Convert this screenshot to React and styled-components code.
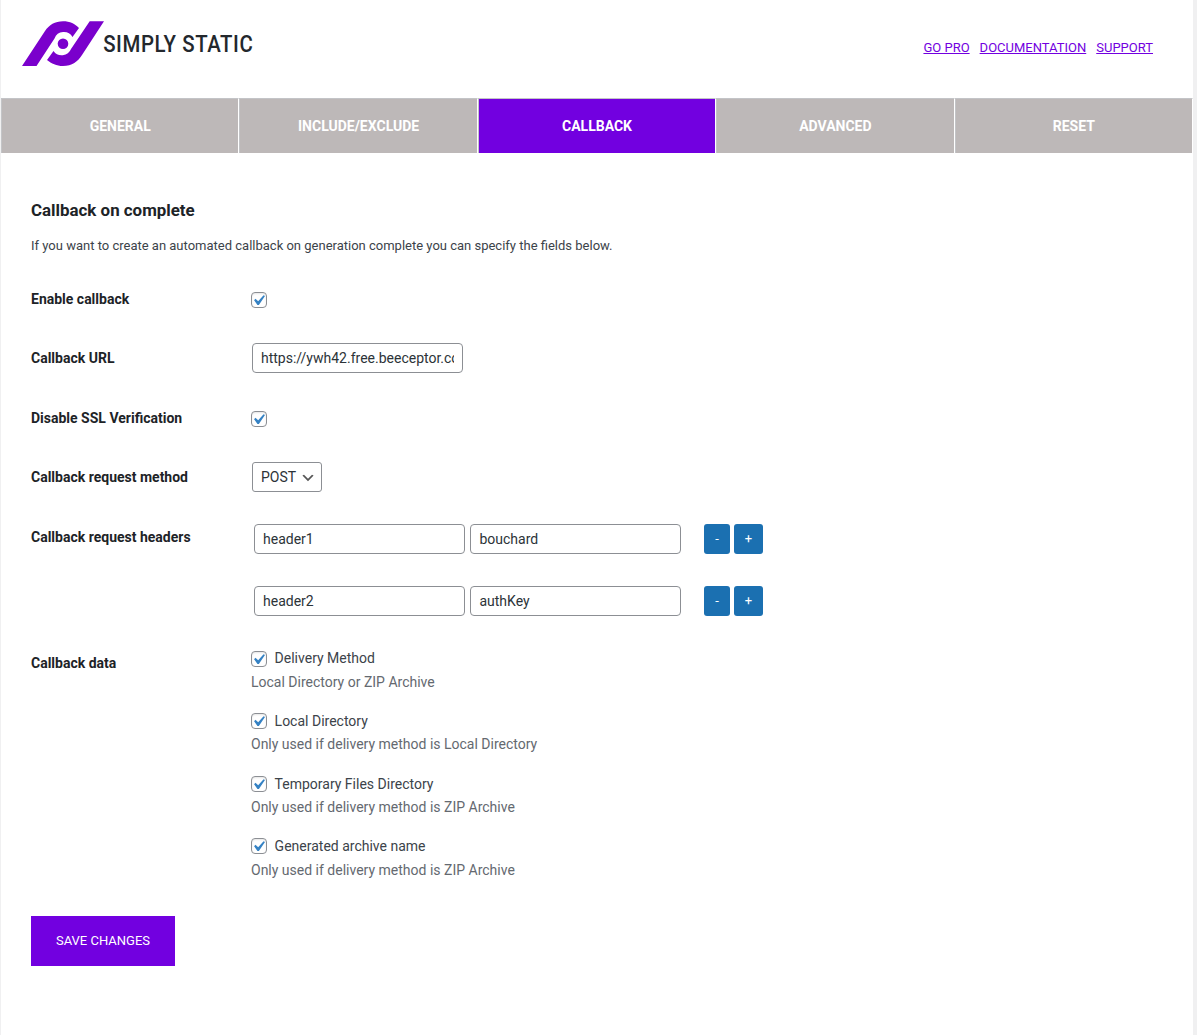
import React from "react";
import styled, { createGlobalStyle } from "styled-components";

const GlobalStyle = createGlobalStyle`
  *, *::before, *::after { box-sizing: border-box; }
  body { margin: 0; background: #f0f0f1; font: 13px/1.4 Roboto, "Liberation Sans", sans-serif; color: #3c434a; }
  h2, p { margin: 0; }
`;

const Page = styled.main`
  width: 1192px;
  min-height: 1035px;
  margin-left: 1px;
  background: #fff;
`;
const Header = styled.header`
  display: flex;
  justify-content: space-between;
  height: 98px;
  padding: 18px 40px 0 20px;
`;
const Links = styled.nav`
  display: flex;
  gap: 10px;
  padding-top: 21px;
`;
const Link = styled.a`
  color: #7200e0;
  font-size: 13px;
  line-height: 18px;
  text-decoration: underline;
  text-transform: uppercase;
`;
const Tabs = styled.nav`
  display: grid;
  grid-template-columns: repeat(5, 1fr);
  height: 55px;
`;
const Tab = styled.a`
  display: flex;
  align-items: center;
  justify-content: center;
  border: 1px solid #c3c4c7;
  border-right-color: #fff;
  border-bottom: 0;
  background: ${(p) => (p.$active ? "#7200e0" : "#bdb8b8")};
  color: #fff;
  font-size: 14px;
  font-weight: 700;
  line-height: 20px;
  text-transform: uppercase;
`;
const Form = styled.form`
  padding: 46px 30px 0;
`;
const Title = styled.h2`
  color: #1d2327;
  font-size: 16.9px;
  font-weight: 700;
  line-height: 22px;
`;
const Intro = styled.p`
  margin-top: 15px;
  font-size: 13px;
  line-height: 20px;
`;
const Row = styled.div`
  display: grid;
  grid-template-columns: 220px 1fr;
  height: ${(p) => p.$height}px;
`;
const Label = styled.label`
  padding-top: ${(p) => p.$top || 0}px;
  color: #1d2327;
  font-size: 14px;
  font-weight: 700;
  line-height: 18px;
`;
const Field = styled.div`
  padding: ${(p) => p.$top || 0}px 0 0 ${(p) => p.$left || 0}px;
`;
const Box = styled.span`
  display: inline-flex;
  flex: none;
  width: 16px;
  height: 16px;
  border: 1px solid #8c8f94;
  border-radius: 4px;
  background: #fff;
  box-shadow: inset 0 1px 2px rgba(0, 0, 0, 0.1);
`;
const Tick = styled.svg`
  flex: none;
  width: 21px;
  height: 21px;
  margin: -3px 0 0 -4px;
`;
const Input = styled.input`
  display: block;
  width: 211px;
  height: 30px;
  margin: 0;
  padding: 0 8px;
  border: 1px solid #8c8f94;
  border-radius: 4px;
  background: #fff;
  color: #2c3338;
  font: 14px/28px Roboto, sans-serif;
`;
const Select = styled.div`
  display: flex;
  align-items: center;
  justify-content: space-between;
  width: 70px;
  height: 30px;
  padding: 0 5px 0 8px;
  border: 1px solid #8c8f94;
  border-radius: 3px;
  color: #2c3338;
  font-size: 14px;
  line-height: 20px;
`;
const Chevron = styled.svg`
  width: 16px;
  height: 16px;
  margin-top: 2px;
`;
const HeaderLine = styled.div`
  display: flex;
  margin-bottom: 32px;
`;
const Pair = styled.div`
  display: flex;
  gap: 5.45px;
  margin-right: 22.55px;
`;
const Buttons = styled.div`
  display: flex;
  gap: 4px;
`;
const SmallButton = styled.button`
  width: ${(p) => p.$width}px;
  height: 30px;
  padding: 0;
  border: 0;
  border-radius: 3px;
  background: #1b70b1;
  color: #fff;
  font: 13px/28px Roboto, sans-serif;
`;
const Option = styled.div`
  height: 62.6px;
`;
const OptionLabel = styled.label`
  display: flex;
  gap: 7.6px;
  height: 23.8px;
  padding-top: 0.4px;
  font-size: 14px;
  line-height: 18px;
`;
const BoxOffset = styled.span`
  display: flex;
  padding-top: 1.2px;
`;
const Description = styled.p`
  color: #646970;
  font-size: 14px;
  line-height: 18px;
`;
const Save = styled.button`
  display: block;
  width: 144px;
  height: 50px;
  padding: 0;
  border: 0;
  background: #7200e0;
  color: #fff;
  font: 13px/50px Roboto, sans-serif;
  text-transform: uppercase;
`;

const Logo = () => (
  <svg width="280" height="60" viewBox="0 0 280 60" role="img" aria-label="Simply Static">
    <g fill="#7a00cc">
      <path d="M1 48 24 13C28 7 34 3.300 42 3.300C49 3.300 54 6 58 10L51.500 19A10 10 0 0 0 33.500 20.500L15.500 48Z" />
      <path d="M68.700 3.300H83L61 37C57 43.500 51 48 42 48C35.500 48 30.500 45.500 26 42L32.500 33A10 10 0 0 0 50 31Z" />
      <circle cx="42" cy="25.700" r="5.300" />
    </g>
    <text transform="translate(82.200 34.200) scale(0.85 1)" textLength="176" lengthAdjust="spacing" fill="#23282d" fontFamily="Roboto, sans-serif" fontSize="24" fontWeight="500">SIMPLY STATIC</text>
  </svg>
);

const Checkbox = () => (
  <Box role="checkbox" aria-checked="true">
    <Tick viewBox="0 0 20 20">
      <path d="M14.830 4.890l1.340.940-5.810 8.380H9.020L5.780 9.670l1.340-1.250 2.570 2.400z" fill="#3582c4" />
    </Tick>
  </Box>
);

const tabs = ["General", "Include/Exclude", "Callback", "Advanced", "Reset"];
const headers = [["header1", "bouchard"], ["header2", "authKey"]];
const options = [
  ["Delivery Method", "Local Directory or ZIP Archive"],
  ["Local Directory", "Only used if delivery method is Local Directory"],
  ["Temporary Files Directory", "Only used if delivery method is ZIP Archive"],
  ["Generated archive name", "Only used if delivery method is ZIP Archive"],
];

export default function App() {
  return (
    <>
      <GlobalStyle />
      <Page>
        <Header>
          <Logo />
          <Links>
            <Link>Go Pro</Link>
            <Link>Documentation</Link>
            <Link>Support</Link>
          </Links>
        </Header>
        <Tabs>
          {tabs.map((t) => <Tab key={t} $active={t === "Callback"}>{t}</Tab>)}
        </Tabs>
        <Form>
          <Title>Callback on complete</Title>
          <Intro>If you want to create an automated callback on generation complete you can specify the fields below.</Intro>
          <Row $height={87}>
            <Label $top={34}>Enable callback</Label>
            <Field $top={36}><Checkbox /></Field>
          </Row>
          <Row $height={60}>
            <Label $top={6}>Callback URL</Label>
            <Field $left={1}><Input defaultValue="https://ywh42.free.beeceptor.com" /></Field>
          </Row>
          <Row $height={59}>
            <Label $top={6}>Disable SSL Verification</Label>
            <Field $top={8}><Checkbox /></Field>
          </Row>
          <Row $height={62}>
            <Label $top={6}>Callback request method</Label>
            <Field $left={1}>
              <Select>
                POST
                <Chevron viewBox="0 0 20 20">
                  <path d="m5 6 5 5 5-5 2 1-7 7-7-7Z" fill="#555" />
                </Chevron>
              </Select>
            </Field>
          </Row>
          <Row $height={125}>
            <Label $top={4}>Callback request headers</Label>
            <Field $left={3}>
              {headers.map(([name, value]) => (
                <HeaderLine key={name}>
                  <Pair>
                    <Input defaultValue={name} />
                    <Input defaultValue={value} />
                  </Pair>
                  <Buttons>
                    <SmallButton type="button" $width={26}>-</SmallButton>
                    <SmallButton type="button" $width={29}>+</SmallButton>
                  </Buttons>
                </HeaderLine>
              ))}
            </Field>
          </Row>
          <Row $height={267}>
            <Label $top={5}>Callback data</Label>
            <Field>
              {options.map(([name, text]) => (
                <Option key={name}>
                  <OptionLabel>
                    <BoxOffset><Checkbox /></BoxOffset>
                    {name}
                  </OptionLabel>
                  <Description>{text}</Description>
                </Option>
              ))}
            </Field>
          </Row>
          <Save type="button">Save changes</Save>
        </Form>
      </Page>
    </>
  );
}
